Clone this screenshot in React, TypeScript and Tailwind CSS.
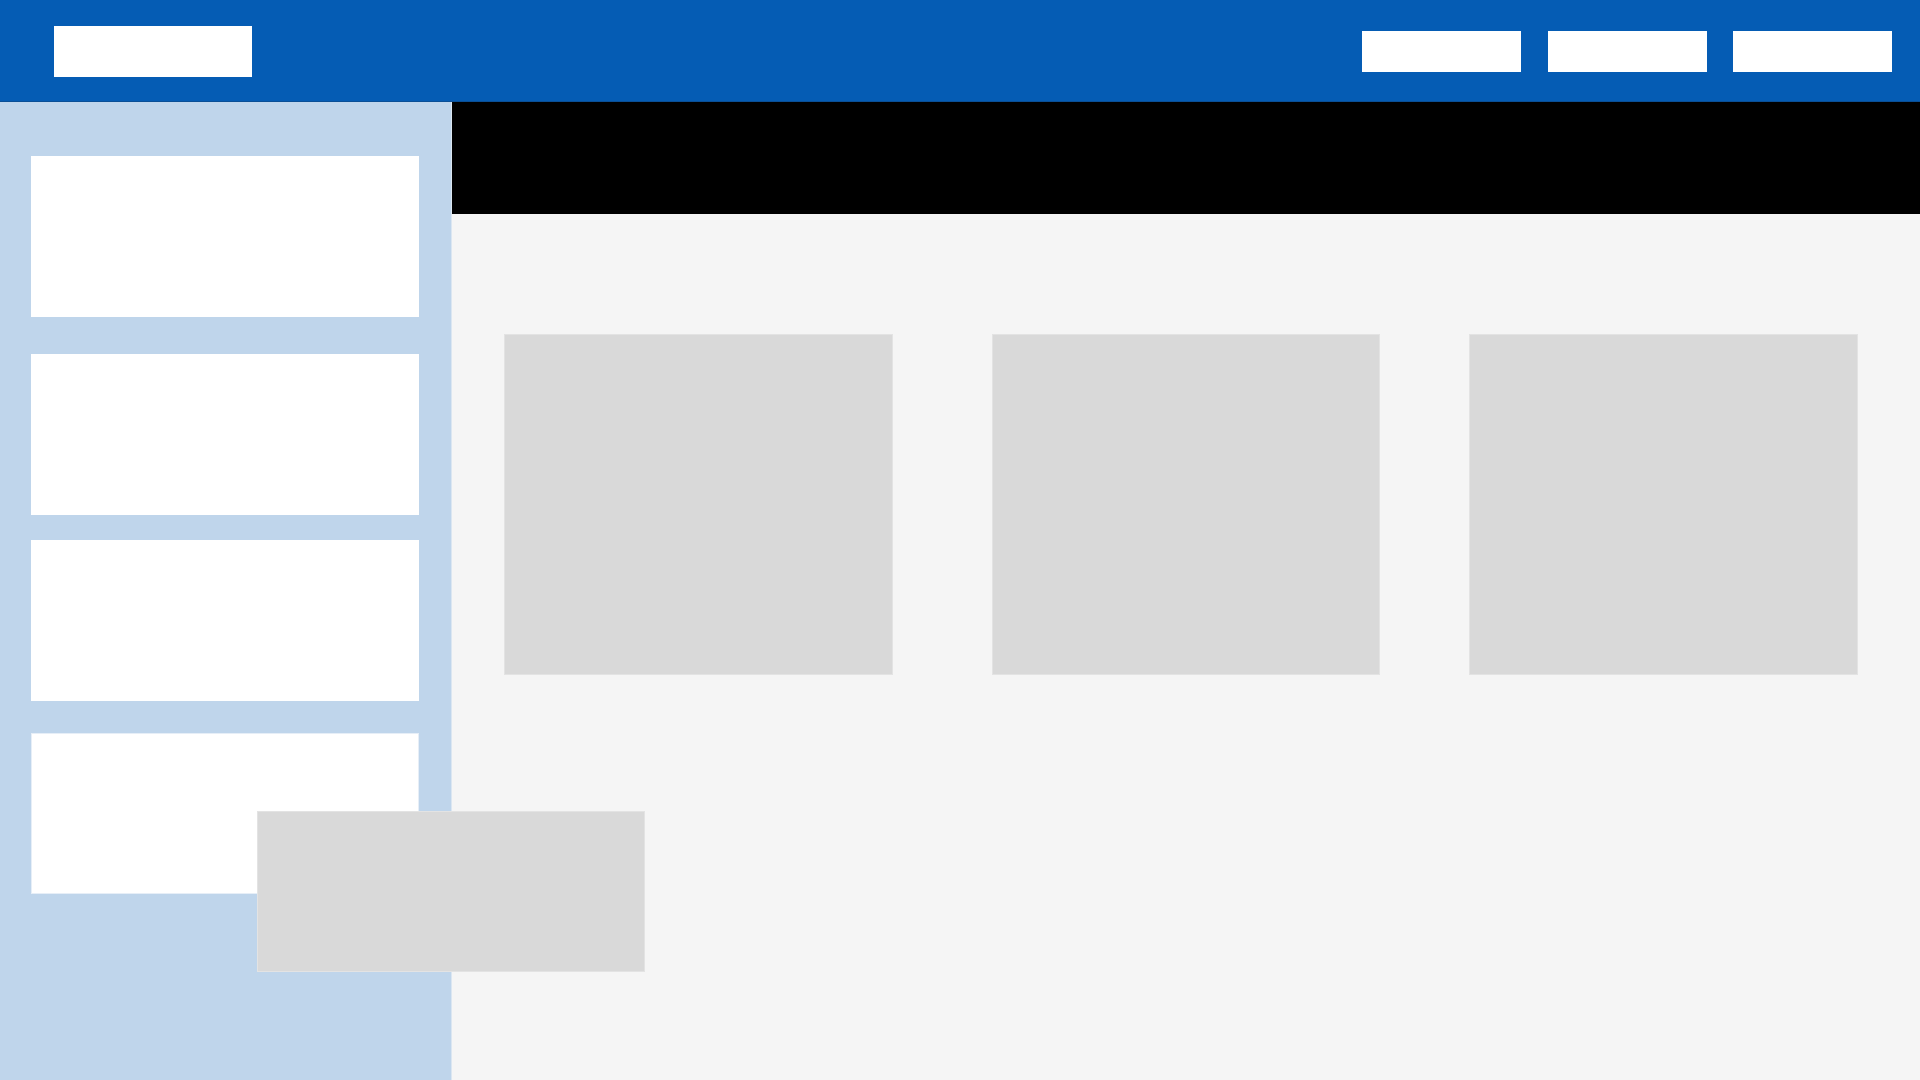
export default function App() {
  return (
    <div className="relative flex h-[1080px] w-[1920px] flex-col overflow-hidden bg-[#f5f5f5]">
      {/* top bar */}
      <header className="flex h-[102px] shrink-0 items-start justify-between border-b border-[#0a4f96] bg-[#055cb4] pl-[54px] pr-[28px]">
        <div className="mt-[26px] h-[51px] w-[198px] bg-white" />
        <nav className="mt-[31px] flex">
          <div className="h-[41px] w-[159px] bg-white" />
          <div className="ml-[27px] h-[41px] w-[159px] bg-white" />
          <div className="ml-[26px] h-[41px] w-[159px] bg-white" />
        </nav>
      </header>

      <div className="flex flex-1">
        {/* sidebar */}
        <aside className="flex w-[451px] shrink-0 flex-col bg-[#bfd5eb] pl-[31px] pt-[54px]">
          <div className="h-[161px] w-[388px] bg-white" />
          <div className="mt-[37px] h-[161px] w-[388px] bg-white" />
          <div className="mt-[25px] h-[161px] w-[388px] bg-white" />
          <div className="mt-[32px] h-[161px] w-[388px] border border-[#e6eef7] bg-white" />
        </aside>

        {/* main */}
        <main className="flex flex-1 flex-col border-l border-[#dbe6f1]">
          <div className="h-[112px] bg-black" />
          <div className="flex pl-[52px] pt-[120px]">
            <div className="h-[341px] w-[389px] border border-[#e3e3e3] bg-[#d9d9d9]" />
            <div className="ml-[99px] h-[341px] w-[388px] border border-[#e3e3e3] bg-[#d9d9d9]" />
            <div className="ml-[89px] h-[341px] w-[389px] border border-[#e3e3e3] bg-[#d9d9d9]" />
          </div>
        </main>
      </div>

      {/* floating panel */}
      <div className="absolute left-[257px] top-[811px] h-[161px] w-[388px] border border-[#e3e3e3] bg-[#d9d9d9]" />
    </div>
  );
}
